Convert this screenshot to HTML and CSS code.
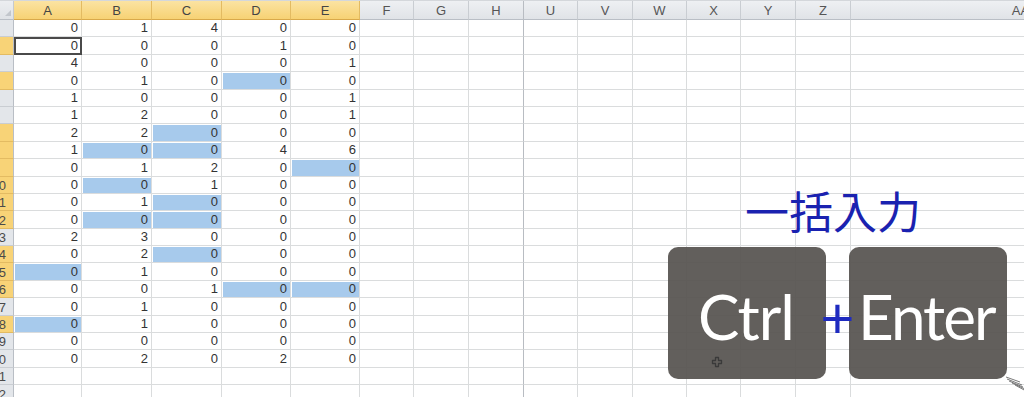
FILE: index.html
```html
<!DOCTYPE html>
<html lang="ja">

<head>
    <meta charset="UTF-8">
    <title>一括入力</title>
    <link rel="stylesheet" href="styles.css">
</head>

<body>
    <div class="sheet" id="sheet"></div>

    <div class="overlay">
        <div class="caption">一括入力</div>
        <div class="keys">
            <div class="key key-ctrl">
                Ctrl
                <svg class="move-cursor" viewBox="0 0 12 12" width="12" height="12">
                    <path d="M4.5 1.5h3v3h3v3h-3v3h-3v-3h-3v-3h3z" fill="none" stroke="#3a3a3a" stroke-width="1.3" stroke-linejoin="round"></path>
                </svg>
            </div>
            <div class="plus">+</div>
            <div class="key key-enter">Enter</div>
        </div>
        <svg class="pen" viewBox="0 0 24 18" width="24" height="18">
            <path d="M2 2l14 5M3 4l15 6M5 6l14 6M8 8l13 6M11 10l11 6" fill="none" stroke="#6b6b6b" stroke-width="0.9"></path>
        </svg>
    </div>

    <script>
        // 列見出し
        const cols = ['A', 'B', 'C', 'D', 'E', 'F', 'G', 'H', 'U', 'V', 'W', 'X', 'Y', 'Z', 'AA'];
        const data = [
            [0, 1, 4, 0, 0],
            [0, 0, 0, 1, 0],
            [4, 0, 0, 0, 1],
            [0, 1, 0, 0, 0],
            [1, 0, 0, 0, 1],
            [1, 2, 0, 0, 1],
            [2, 2, 0, 0, 0],
            [1, 0, 0, 4, 6],
            [0, 1, 2, 0, 0],
            [0, 0, 1, 0, 0],
            [0, 1, 0, 0, 0],
            [0, 0, 0, 0, 0],
            [2, 3, 0, 0, 0],
            [0, 2, 0, 0, 0],
            [0, 1, 0, 0, 0],
            [0, 0, 1, 0, 0],
            [0, 1, 0, 0, 0],
            [0, 1, 0, 0, 0],
            [0, 0, 0, 0, 0],
            [0, 2, 0, 2, 0]
        ];
        // 選択されている空白セル
        const selected = ['D4', 'C7', 'B8', 'C8', 'E9', 'B10', 'C11', 'B12', 'C12', 'C14', 'A15', 'D16', 'E16', 'A18'];
        const sheet = document.getElementById('sheet');

        function add(cls, text) {
            const el = document.createElement('div');
            el.className = cls;
            if (text !== undefined) el.textContent = text;
            sheet.appendChild(el);
            return el;
        }

        add('corner');
        cols.forEach((c, i) => {
            let cls = 'col-head' + (i < 5 ? ' hot' : '');
            if (c === 'H') cls += ' hidden-after';
            add(cls, c);
        });

        for (let r = 1; r <= 22; r++) {
            const rowSel = selected.some(s => s.slice(1) === String(r)) || r === 2;
            const head = add('row-head' + (rowSel ? ' hot' : ''));
            if (r >= 10) {
                const span = document.createElement('span');
                span.textContent = r;
                head.appendChild(span);
            }
            cols.forEach((c, i) => {
                let cls = 'cell';
                if (selected.includes(c + r)) cls += ' sel';
                if (c + r === 'A2') cls += ' active';
                if (c === 'H') cls += ' hidden-after';
                const v = data[r - 1] && i < 5 ? data[r - 1][i] : '';
                add(cls, v);
            });
        }
    </script>
</body>

</html>
```

FILE: styles.css
```css
* {
    box-sizing: border-box;
    margin: 0;
    padding: 0;
}

body {
    width: 1024px;
    height: 397px;
    overflow: hidden;
    background-color: white;
    font-family: "Liberation Sans", Arial, sans-serif;
    position: relative;
}

.sheet {
    display: grid;
    grid-template-columns: 14px 68px 70px 70px 69px 69px 54px 55px 55px 54px 55px 54px 54px 55px 55px 340px;
    grid-template-rows: 19px repeat(22, 17.4px);
    width: 1200px;
    border-top: 1px solid #d4d7db;
}

.corner {
    background: linear-gradient(#eceef1, #dfe2e6);
    border-right: 1px solid #c5c9cf;
    border-bottom: 1px solid #b9bec5;
    position: relative;
}

.corner::after {
    content: "";
    position: absolute;
    right: 2px;
    bottom: 3px;
    border-left: 6px solid transparent;
    border-bottom: 6px solid #c2c6cc;
}

.col-head {
    display: flex;
    align-items: center;
    justify-content: center;
    font-size: 13px;
    color: #555;
    background: linear-gradient(#eef0f3, #e0e3e7);
    border-right: 1px solid #c9cdd2;
    border-bottom: 1px solid #b9bec5;
}

.col-head.hot {
    background: linear-gradient(#fbe3a2, #f7d274);
    border-right-color: #e3bb62;
    border-bottom-color: #d9a94a;
    color: #444;
}

.row-head {
    overflow: hidden;
    font-size: 13px;
    color: #4a4a4a;
    background-color: #e3e6ea;
    border-right: 1px solid #b9bec5;
    border-bottom: 1px solid #c9cdd2;
    display: flex;
    align-items: flex-end;
    justify-content: flex-end;
    padding-right: 7px;
    line-height: 15px;
}

.row-head span {
    white-space: nowrap;
}

.row-head.hot {
    background-color: #f8d377;
    border-bottom-color: #e3bb62;
}

.cell {
    display: flex;
    align-items: flex-end;
    justify-content: flex-end;
    padding: 0 3px 1px 0;
    font-size: 13px;
    line-height: 15px;
    color: #333;
    border-right: 1px solid #dadcdd;
    border-bottom: 1px solid #dadcdd;
}

.cell.sel {
    background-color: #a7caec;
    box-shadow: inset 1px 1px 0 #fff;
}

.cell.active {
    outline: 2px solid #4a4a4a;
    outline-offset: -2px;
}

.hidden-after {
    border-right-color: #b8bcc2;
}

/* 操作説明のオーバーレイ */
.overlay {
    position: absolute;
    left: 660px;
    top: 176px;
    width: 364px;
    height: 221px;
}

.caption {
    padding: 8px 0 0 85px;
    font-family: "Noto Sans CJK JP", sans-serif;
    font-size: 44px;
    line-height: 52px;
    color: #1a22b0;
}

.keys {
    display: flex;
    margin: 11px 0 0 8px;
}

.key {
    position: relative;
    width: 158px;
    height: 132px;
    border-radius: 10px;
    background-color: rgba(86, 83, 80, 0.93);
    color: white;
    font-family: "Lato", sans-serif;
    font-size: 62px;
    line-height: 1;
    padding-top: 38px;
    letter-spacing: -1px;
}

.key-ctrl {
    padding-left: 30px;
}

.key-enter {
    padding-left: 9px;
    letter-spacing: -2px;
}

.plus {
    width: 23px;
    display: flex;
    justify-content: center;
    padding-top: 42px;
    font-family: "Liberation Sans", sans-serif;
    font-size: 58px;
    line-height: 1;
    color: #1f2bc0;
    position: relative;
    z-index: 1;
}

.move-cursor {
    position: absolute;
    left: 43px;
    top: 109px;
}

.pen {
    position: absolute;
    right: -4px;
    bottom: 4px;
}
```
